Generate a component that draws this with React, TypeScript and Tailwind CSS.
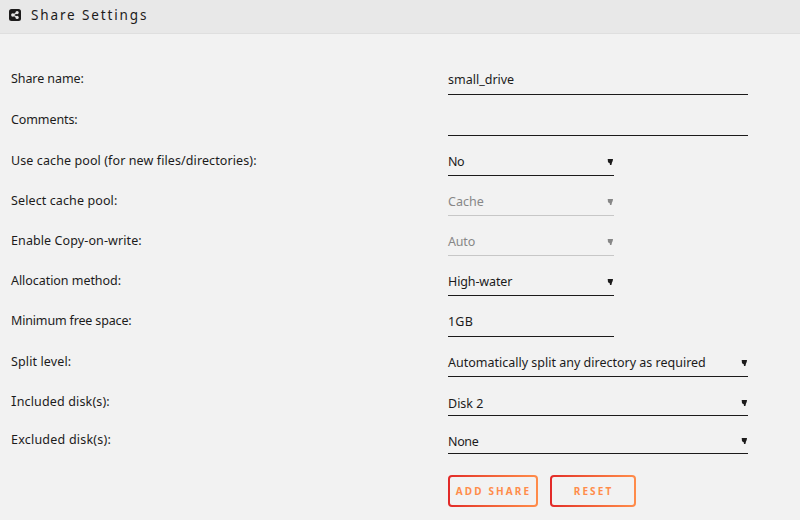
import { clsx } from "clsx";
import type { ReactNode } from "react";

type Field = {
	label: ReactNode;
	value: string;
	kind: "input" | "select";
	disabled?: boolean;
	row: string;
	labelClass: string;
	width: string;
	valueClass: string;
	arrowClass?: string;
};

const FIELDS: Field[] = [
	{
		label: "Share name:",
		value: "small_drive",
		kind: "input",
		row: "h-[61px]",
		labelClass: "pb-1.5 tracking-[-0.08px]",
		width: "w-[300px]",
		valueClass: "pb-1",
	},
	{
		label: "Comments:",
		value: "",
		kind: "input",
		row: "h-[41px]",
		labelClass: "pb-1.5 tracking-[-0.1px]",
		width: "w-[300px]",
		valueClass: "pb-1",
	},
	{
		label: "Use cache pool (for new files/directories):",
		value: "No",
		kind: "select",
		row: "h-10",
		labelClass: "pb-[5px] tracking-[0.1px]",
		width: "w-[166px]",
		valueClass: "pb-[3px] tracking-[-0.5px]",
		arrowClass: "mb-2.5",
	},
	{
		label: "Select cache pool:",
		value: "Cache",
		kind: "select",
		disabled: true,
		row: "h-10",
		labelClass: "pb-[5px] tracking-[0.11px]",
		width: "w-[166px]",
		valueClass: "pb-[3px]",
		arrowClass: "mb-2.5",
	},
	{
		label: "Enable Copy-on-write:",
		value: "Auto",
		kind: "select",
		disabled: true,
		row: "h-10",
		labelClass: "pb-[5px] tracking-[0.1px]",
		width: "w-[166px]",
		valueClass: "pb-[3px] tracking-[-0.2px]",
		arrowClass: "mb-2.5",
	},
	{
		label: "Allocation method:",
		value: "High-water",
		kind: "select",
		row: "h-10",
		labelClass: "pb-[5px] tracking-[-0.05px]",
		width: "w-[166px]",
		valueClass: "pb-[3px] tracking-[-0.12px]",
		arrowClass: "mb-2.5",
	},
	{
		label: "Minimum free space:",
		value: "1GB",
		kind: "input",
		row: "h-[41px]",
		labelClass: "pb-1.5 tracking-[-0.16px]",
		width: "w-[166px]",
		valueClass: "pb-1 tracking-[0.2px]",
	},
	{
		label: "Split level:",
		value: "Automatically split any directory as required",
		kind: "select",
		row: "h-10",
		labelClass: "pb-[5px] tracking-[0.12px]",
		width: "w-[300px]",
		valueClass: "pb-[3px]",
		arrowClass: "mb-2.5",
	},
	{
		label: (
			<>
				<span className="font-[Inter] [font-feature-settings:'cv08']">I</span>
				ncluded disk(s):
			</>
		),
		value: "Disk 2",
		kind: "select",
		row: "h-[39px]",
		labelClass: "pb-1 tracking-[0.15px]",
		width: "w-[300px]",
		valueClass: "pb-px",
		arrowClass: "mb-[9px]",
	},
	{
		label: "Excluded disk(s):",
		value: "None",
		kind: "select",
		row: "h-[38px]",
		labelClass: "pb-1 tracking-[0.22px]",
		width: "w-[300px]",
		valueClass: "pb-px tracking-[-0.35px]",
		arrowClass: "mb-[9px]",
	},
];

function ShareIcon() {
	return (
		<svg width="12" height="12" viewBox="0 0 12 12" className="shrink-0">
			<rect width="12" height="12" rx="2.5" fill="#1c1b1b" />
			<path d="M8 3.7 4 6l4 2.3" fill="none" stroke="#e8e8e8" strokeWidth="1.2" />
			<circle cx="8.1" cy="3.6" r="1.6" fill="#e8e8e8" />
			<circle cx="3.8" cy="6" r="1.7" fill="#e8e8e8" />
			<circle cx="8.1" cy="8.4" r="1.6" fill="#e8e8e8" />
		</svg>
	);
}

function Arrow({ className }: { className?: string }) {
	return (
		<svg
			width="6"
			height="6"
			viewBox="0 0 6 6"
			fill="currentColor"
			className={clsx("mr-px shrink-0", className)}
		>
			<path d="M0.7 0H6L5.7 2 5 3.5 4.4 6H3L2.7 4.3 1 3.2Z" />
		</svg>
	);
}

function FieldRow({ field }: { field: Field }) {
	return (
		<div className={clsx("flex items-end pl-[11px]", field.row)}>
			<div className={clsx("w-[437px] leading-5", field.labelClass)}>
				{field.label}
			</div>
			<div
				className={clsx(
					"flex h-7 items-end justify-between border-b",
					field.width,
					field.disabled
						? "border-[#c7c7c7] text-[#878787]"
						: "border-[#1c1b1b]",
				)}
			>
				<span className={clsx("leading-5", field.valueClass)}>
					{field.value}
				</span>
				{field.kind === "select" && <Arrow className={field.arrowClass} />}
			</div>
		</div>
	);
}

function GradientButton({
	children,
	className,
}: {
	children: ReactNode;
	className: string;
}) {
	return (
		<button
			type="button"
			className={clsx(
				"h-8 rounded bg-linear-to-r from-[#e22828] to-[#ff8c4a] p-0.5",
				className,
			)}
		>
			<span className="flex h-full items-center justify-center rounded-xs bg-[#f2f2f2] pl-px text-[10px] font-bold tracking-[2.1px] text-[#ff8c4a]">
				{children}
			</span>
		</button>
	);
}

export default function App() {
	return (
		<div className="h-[520px] w-[800px] overflow-hidden bg-[#f2f2f2] font-['Noto_Sans',sans-serif] text-[12.5px] text-[#1c1b1b]">
			<header className="flex h-[34px] items-center gap-2.5 border-b border-[#dfdfdf] bg-[#e8e8e8] pb-[3px] pl-[9px]">
				<ShareIcon />
				<h1 className="text-[13.5px] leading-5 tracking-[1.87px]">
					Share Settings
				</h1>
			</header>
			<main>
				{FIELDS.map((field, i) => (
					<FieldRow key={i} field={field} />
				))}
				<div className="flex gap-3 pt-[21px] pl-[448px]">
					<GradientButton className="w-[90px]">ADD SHARE</GradientButton>
					<GradientButton className="w-[86px]">RESET</GradientButton>
				</div>
			</main>
		</div>
	);
}
